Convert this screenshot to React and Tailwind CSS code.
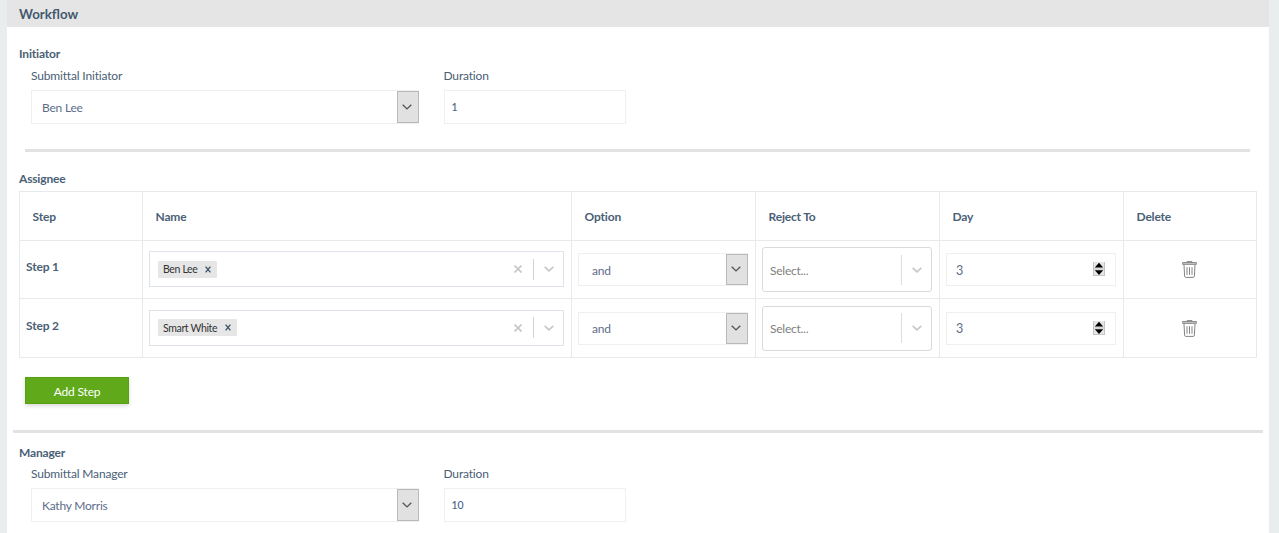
const steps = [
  { id: 1, label: 'Step 1', name: 'Ben Lee', option: 'and', day: 3 },
  { id: 2, label: 'Step 2', name: 'Smart White', option: 'and', day: 3 },
]

function Chevron({ className }) {
  return (
    <svg viewBox="0 0 10 6" fill="none" stroke="currentColor" className={className}>
      <path d="M0.7 0.8 L5 4.9 L9.3 0.8" />
    </svg>
  )
}

function NativeSelect({ value, className, textClass }) {
  return (
    <div className={`flex border border-[#eeefef] bg-white ${className}`}>
      <span className={`flex-1 self-center text-[12px] text-[#5d6c8a] ${textClass}`}>{value}</span>
      <span className="-mr-px flex w-[22px] items-center justify-center border border-[#b9b9b9] bg-[#e1e1e1] text-[#555]">
        <Chevron className="mb-px mr-[2px] h-[6px] w-[10px] stroke-[1.4]" />
      </span>
    </div>
  )
}

function NameSelect({ value }) {
  return (
    <div className="mb-px flex h-9 items-center border border-[#dde3e8] bg-white pl-2">
      <span className="flex h-[17px] items-center rounded-[1px] bg-[#e6e6e6] pl-[5px] pr-[6px] text-[10.5px] leading-none tracking-[-0.35px] text-[#333]">
        <span className="pt-px">{value}</span>
        <svg viewBox="0 0 6 7" fill="none" stroke="#3d566e" className="ml-2 h-[7px] w-[6px] stroke-[1.4]">
          <path d="M0.6 0.6 L5.4 6.4 M5.4 0.6 L0.6 6.4" />
        </svg>
      </span>
      <svg viewBox="0 0 8 8" fill="none" stroke="#c8c8c8" className="ml-auto size-[8px] stroke-[1.7]">
        <path d="M0.5 0.5 L7.5 7.5 M7.5 0.5 L0.5 7.5" />
      </svg>
      <span className="ml-[11px] h-[21px] w-px bg-[#d4d4d4]" />
      <Chevron className="ml-[10px] mr-[9px] h-[6px] w-[10px] stroke-[1.7] text-[#c8c8c8]" />
    </div>
  )
}

function RejectSelect() {
  return (
    <div className="flex h-[45px] items-center rounded-[3px] border border-[#dadada] bg-white pl-[7px] text-[12px] tracking-[-0.25px] text-[#808080]">
      <span className="pt-0.5">Select...</span>
      <span className="ml-auto h-[30px] w-[1.5px] bg-[#dedede]" />
      <Chevron className="ml-[10px] mr-[9px] h-[6px] w-[10px] stroke-[1.7] text-[#c8c8c8]" />
    </div>
  )
}

function DayInput({ value }) {
  return (
    <div className="flex h-[33px] items-center border border-[#eeefef] bg-white pl-[9px] pr-[10px]">
      <span className="pt-[3px] text-[12.5px] leading-none text-[#5d6c8a]">{value}</span>
      <svg viewBox="0 0 12 14" className="mb-px ml-auto h-[14px] w-[12px]">
        <path d="M0 0H12V14H0Z" fill="#e6e6e6" />
        <path d="M0.5 0V14M11.5 0V14M0 7H12M0 13.5H12" stroke="#c4c4c4" fill="none" />
        <path d="M6 0.8 L10.2 5.6 H1.8Z M6 13 L10.2 8.2 H1.8Z" fill="#000" />
      </svg>
    </div>
  )
}

function TrashIcon() {
  return (
    <svg viewBox="0 0 15 17" fill="none" stroke="#858585" className="mx-auto h-[17px] w-[15px]">
      <path d="M5 1.2 V0.6 H10 V1.2" />
      <path d="M0.6 1.5 H14.4 V3.4 H0.6Z" fill="#c4c4c4" strokeWidth="0.9" />
      <path d="M2 3.8 L2.6 15.2 Q2.7 16.4 3.8 16.4 H11.2 Q12.3 16.4 12.4 15.2 L13 3.8" />
      <path d="M5 6.2 V13.8 M7.5 6.2 V13.8 M10 6.2 V13.8" strokeWidth="1" />
    </svg>
  )
}

function Participant({ title, label, name, duration, className }) {
  return (
    <section>
      <h2 className="text-[12px] font-bold leading-4">{title}</h2>
      <div className={`ml-3 flex gap-[24.5px] ${className}`}>
        <div className="w-[388px]">
          <div className="text-[12px] leading-4">{label}</div>
          <NativeSelect value={name} className="mt-[6px] h-[34px]" textClass="pl-[10px] pt-px tracking-[-0.22px]" />
        </div>
        <div className="w-[182.5px]">
          <div className="text-[12px] leading-4">Duration</div>
          <div className="mt-[6px] flex h-[34px] items-center border border-[#eeefef] pl-[7px] pt-0.5 text-[10.5px] font-medium tracking-normal text-[#4a5f8a]">
            {duration}
          </div>
        </div>
      </div>
    </section>
  )
}

const th = 'border border-[#e6eaec] pl-[12.5px] pt-0.5 text-left font-bold'
const td = 'border border-[#e6eaec] pl-[6px] pr-[7px] py-0'

export default function App() {
  return (
    <div className="h-[533px] overflow-hidden bg-[#e9eded] pl-[7px] pr-[10px] font-['Lato',sans-serif] tracking-[-0.17px] text-[#4a6076]">
      <div className="h-full bg-white">
        <header className="flex h-[27px] items-center bg-[#e5e5e5] pl-3 pt-0.5 text-[13.3px] font-bold tracking-normal text-[#435970]">
          Workflow
        </header>

        <div className="pl-3 pt-[19px]">
          <Participant title="Initiator" label="Submittal Initiator" name="Ben Lee" duration="1" className="mt-[6px]" />

          <hr className="ml-[6px] mt-[25px] h-[3px] w-[1225px] border-0 bg-[#e2e2e2]" />

          <h2 className="mt-[19px] text-[12px] font-bold leading-4">Assignee</h2>
          <table className="mt-1 w-[1238px] table-fixed border-collapse text-[12px]">
            <colgroup>
              <col className="w-[123px]" />
              <col className="w-[429px]" />
              <col className="w-[184px]" />
              <col className="w-[184px]" />
              <col className="w-[184px]" />
              <col className="w-[133px]" />
            </colgroup>
            <thead>
              <tr className="h-[49px]">
                <th className={th}>Step</th>
                <th className={th}>Name</th>
                <th className={th}>Option</th>
                <th className={th}>Reject To</th>
                <th className={th}>Day</th>
                <th className={th}>Delete</th>
              </tr>
            </thead>
            <tbody>
              {steps.map((step) => (
                <tr key={step.id} className="h-[58px] last:h-[59px]">
                  <td className={`${td} pb-[5px] font-bold`}>{step.label}</td>
                  <td className={td}>
                    <NameSelect value={step.name} />
                  </td>
                  <td className={td}>
                    <NativeSelect value={step.option} className="h-[33px]" textClass="pl-[13px] pt-0.5" />
                  </td>
                  <td className={td}>
                    <RejectSelect />
                  </td>
                  <td className={td}>
                    <DayInput value={step.day} />
                  </td>
                  <td className={td}>
                    <TrashIcon />
                  </td>
                </tr>
              ))}
            </tbody>
          </table>

          <button className="ml-[6px] mt-[19px] block h-[27px] w-[104px] border border-[#58a014] bg-[#5fa91b] pt-0.5 text-[12px] leading-none text-white shadow-[0_2px_4px_rgba(0,0,0,0.15)]">
            Add Step
          </button>

          <hr className="-ml-[6px] mb-[12px] mt-[26px] h-[3px] w-[1250px] border-0 bg-[#e2e2e2]" />

          <Participant title="Manager" label="Submittal Manager" name="Kathy Morris" duration="10" className="mt-[5px]" />
        </div>
      </div>
    </div>
  )
}
